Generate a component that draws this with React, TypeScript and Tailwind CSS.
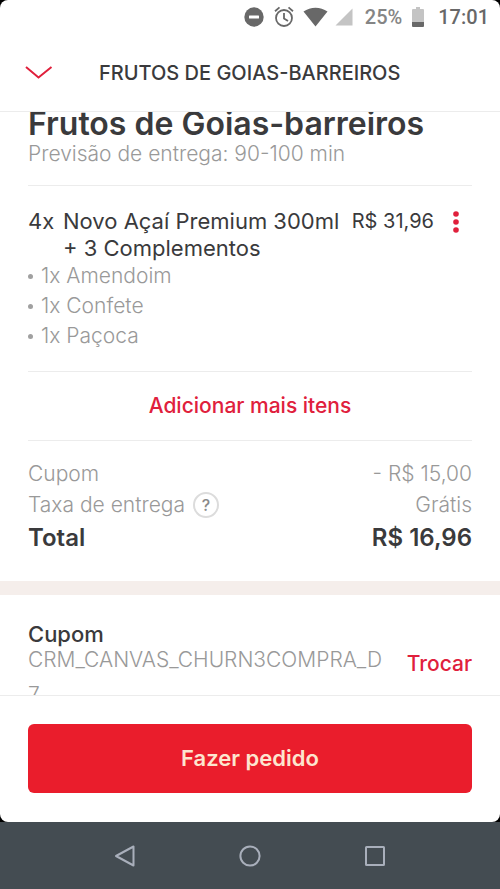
import { useState } from "react";

const complements = ["1x Amendoim", "1x Confete", "1x Paçoca"];

function StatusBar() {
  return (
    <div className="flex h-[34px] shrink-0 items-center justify-end pr-[11px] font-[Roboto,sans-serif] text-xl text-[#686868]">
      <svg width="20" height="20" viewBox="0 0 20 20" className="mr-[10px]">
        <circle cx="10" cy="10" r="9.7" fill="#686868" />
        <rect x="5" y="8.5" width="10" height="3" rx="0.5" fill="#fff" />
      </svg>
      <svg
        width="20"
        height="22"
        viewBox="0 0 20 22"
        fill="none"
        stroke="#686868"
        strokeWidth="1.8"
        className="mr-[9px]"
      >
        <circle cx="10" cy="12" r="8" />
        <path d="M10 7v5.4l4 2.6M1 5.2 5.5 1.4M19 5.2 14.5 1.4" />
      </svg>
      <svg width="25" height="20" viewBox="0 0 25 20" className="mr-[7px]">
        <path d="M0.5 4.6C7.5-0.6 17.5-0.6 24.5 4.6L12.5 19.5Z" fill="#686868" />
      </svg>
      <svg width="18" height="18" viewBox="0 0 18 18" className="mr-3">
        <path d="M17.5 0.5V17.5H0.5Z" fill="#c4c4c4" />
      </svg>
      <span className="mr-[10px] font-medium text-[#858585]">25%</span>
      <svg width="12" height="20" viewBox="0 0 12 20" className="mr-[14px]">
        <path d="M4 0h4v2h3q1 0 1 1v13H0V3q0-1 1-1h3Z" fill="#c4c4c4" />
        <path d="M0 15h12v4q0 1-1 1H1q-1 0-1-1Z" fill="#686868" />
      </svg>
      <span className="font-medium">17:01</span>
    </div>
  );
}

function Header() {
  return (
    <header className="flex h-[78px] shrink-0 items-center border-b border-[#ececec] px-6">
      <button type="button" aria-label="Fechar" className="mr-[46px]">
        <svg
          width="29"
          height="15"
          viewBox="0 0 29 15"
          fill="none"
          stroke="#e0203c"
          strokeWidth="2"
        >
          <path d="M2 2 14.5 12.5 27.5 2" />
        </svg>
      </button>
      <h1 className="text-xl font-medium">FRUTOS DE GOIAS-BARREIROS</h1>
    </header>
  );
}

function OrderItem() {
  return (
    <section className="border-b border-[#ececec] pt-[22px] pb-5">
      <div className="flex text-[22px] leading-[27px]">
        <span className="w-[35px] shrink-0">4x</span>
        <h3 className="whitespace-nowrap">
          Novo Açaí Premium 300ml
          <br />+ 3 Complementos
        </h3>
        <span className="ml-auto text-xl leading-[27px] whitespace-nowrap">
          R$ 31,96
        </span>
        <button
          type="button"
          aria-label="Opções do item"
          className="mr-3 ml-[18px] flex h-[27px] items-center"
        >
          <svg width="8" height="24" viewBox="0 0 8 24" fill="#e0203c">
            <circle cx="4" cy="4" r="2.8" />
            <circle cx="4" cy="12" r="2.8" />
            <circle cx="4" cy="20" r="2.8" />
          </svg>
        </button>
      </div>
      <ul className="-mt-px text-[21px] leading-[30px] font-light text-[#999]">
        {complements.map((name) => (
          <li key={name} className="flex items-center gap-2">
            <span className="size-[5px] rounded-full bg-[#a0a0a0]" />
            {name}
          </li>
        ))}
      </ul>
    </section>
  );
}

function Totals() {
  return (
    <section className="px-7 pt-[17px] pb-[26px]">
      <div className="flex justify-between text-[21px] leading-[31px] font-light text-[#999]">
        <span>Cupom</span>
        <span>- R$ 15,00</span>
      </div>
      <div className="flex justify-between text-[21px] leading-[31px] font-light text-[#999]">
        <div className="flex items-center gap-2">
          <span>Taxa de entrega</span>
          <button
            type="button"
            aria-label="Sobre a taxa de entrega"
            className="flex size-[26px] items-center justify-center rounded-full border-2 border-[#dcdcdc] text-base font-medium text-[#8a8a8a]"
          >
            ?
          </button>
        </div>
        <span>Grátis</span>
      </div>
      <div className="flex justify-between text-2xl leading-[35px] font-semibold">
        <span>Total</span>
        <span>R$ 16,96</span>
      </div>
    </section>
  );
}

function Coupon() {
  return (
    <section className="flex items-start justify-between border-t-[14px] border-[#f5eeeb] px-7 pt-[31px]">
      <div className="w-[355px]">
        <h3 className="text-[22px] leading-4 font-medium">Cupom</h3>
        <p className="text-[21px] leading-[35px] font-light break-all text-[#999]">
          CRM_CANVAS_CHURN3COMPRA_D7
        </p>
      </div>
      <button
        type="button"
        className="mt-6 text-[21px] leading-7 font-medium text-[#e0203c]"
      >
        Trocar
      </button>
    </section>
  );
}

function NavBar() {
  return (
    <nav className="flex h-[67px] shrink-0 items-center justify-center gap-[103px] bg-[#444c52]">
      <button type="button" aria-label="Voltar">
        <svg width="22" height="22" viewBox="0 0 22 22" fill="none" stroke="#a9afbb" strokeWidth="2" strokeLinejoin="round">
          <path d="M19.5 1.5v19L2 11Z" />
        </svg>
      </button>
      <button type="button" aria-label="Início">
        <svg width="22" height="22" viewBox="0 0 22 22" fill="none" stroke="#a9afbb" strokeWidth="2">
          <circle cx="11" cy="11" r="9.6" />
        </svg>
      </button>
      <button type="button" aria-label="Recentes">
        <svg width="22" height="22" viewBox="0 0 22 22" fill="none" stroke="#a9afbb" strokeWidth="2">
          <rect x="2" y="2" width="18" height="18" rx="0.5" />
        </svg>
      </button>
    </nav>
  );
}

export default function App() {
  const [ordered, setOrdered] = useState(false);

  return (
    <div className="flex h-screen flex-col bg-black font-[Inter,sans-serif] text-[#3a3a3c]">
      <div className="flex min-h-0 flex-1 flex-col overflow-hidden rounded-lg bg-white">
        <StatusBar />
        <Header />
        <main className="min-h-0 flex-1 overflow-y-auto [scrollbar-width:none]">
          <div className="px-7">
            <div className="border-b border-[#ececec] pb-4">
              <h2 className="-mt-1 text-[32px] leading-[31px] font-semibold whitespace-nowrap">
                Frutos de Goias-barreiros
              </h2>
              <p className="text-[21px] leading-[30px] font-light text-[#999]">
                Previsão de entrega: 90-100 min
              </p>
            </div>
            <OrderItem />
            <button
              type="button"
              className="block h-[69px] w-full border-b border-[#ececec] text-[21px] font-medium text-[#e0203c]"
            >
              Adicionar mais itens
            </button>
          </div>
          <Totals />
          <Coupon />
        </main>
        <footer className="shrink-0 border-t border-[#ececec] px-7 pt-7 pb-[29px]">
          <button
            type="button"
            disabled={ordered}
            onClick={() => setOrdered(true)}
            className="h-[69px] w-full rounded-md bg-[#ea1d2c] text-[22px] font-semibold text-[#fde5cf]"
          >
            Fazer pedido
          </button>
        </footer>
      </div>
      <NavBar />
    </div>
  );
}
